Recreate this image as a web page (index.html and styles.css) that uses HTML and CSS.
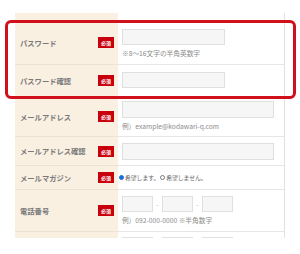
FILE: index.html
```html
<!DOCTYPE html>
<html lang="ja">
<head>
  <meta charset="UTF-8" />
  <meta name="viewport" content="width=device-width, initial-scale=1" />
  <title>会員登録</title>
  <link rel="stylesheet" href="styles.css">
</head>
<body>
  <div class="page">
    <div class="form">
      <div class="row row-top">
        <div class="label"></div>
        <div class="field"></div>
      </div>

      <div class="row row-pass">
        <div class="label"><span class="label-text">パスワード</span><span class="req">必須</span></div>
        <div class="field">
          <input class="input input-m" type="password" />
          <p class="note">※8～16文字の半角英数字</p>
        </div>
      </div>

      <div class="row row-pass2">
        <div class="label"><span class="label-text">パスワード確認</span><span class="req">必須</span></div>
        <div class="field">
          <input class="input input-m" type="password" />
        </div>
      </div>

      <div class="row row-mail">
        <div class="label"><span class="label-text">メールアドレス</span><span class="req">必須</span></div>
        <div class="field">
          <input class="input input-l" type="email" />
          <p class="note">例）example@kodawari-q.com</p>
        </div>
      </div>

      <div class="row row-mail2">
        <div class="label"><span class="label-text">メールアドレス確認</span><span class="req">必須</span></div>
        <div class="field">
          <input class="input input-l" type="email" />
        </div>
      </div>

      <div class="row row-magazine">
        <div class="label"><span class="label-text">メールマガジン</span><span class="req">必須</span></div>
        <div class="field field-radio">
          <span class="radio checked"></span><span class="radio-text">希望します。</span>
          <span class="radio"></span><span class="radio-text">希望しません。</span>
        </div>
      </div>

      <div class="row row-tel">
        <div class="label"><span class="label-text">電話番号</span><span class="req">必須</span></div>
        <div class="field">
          <div class="tel">
            <input class="input input-s" type="text" />
            <span class="dash">-</span>
            <input class="input input-s" type="text" />
            <span class="dash">-</span>
            <input class="input input-s" type="text" />
          </div>
          <p class="note">例）092-000-0000 ※半角数字</p>
        </div>
      </div>

      <div class="row row-next">
        <div class="label"></div>
        <div class="field">
          <div class="tel tel-cut">
            <span class="input input-s"></span>
            <span class="dash"></span>
            <span class="input input-s"></span>
            <span class="dash"></span>
            <span class="input input-s"></span>
          </div>
        </div>
      </div>
    </div>

    <!-- highlight frame over the password rows -->
    <div class="highlight"></div>
  </div>
</body>
</html>
```

FILE: styles.css
```css
/* Global Styles */
body {
  margin: 0;
  background-color: #fff;
  font-family: "Noto Sans CJK JP", "Noto Sans", sans-serif;
}
.page {
  position: relative;
  width: 300px;
  padding: 13px 0 0 15px;
  box-sizing: border-box;
}

/* Form Table */
.form {
  width: 270px;
  height: 225px;
  border-right: 1px solid #e2e2e2;
  box-sizing: border-box;
  overflow: hidden;
}
.row {
  display: flex;
}
.label {
  width: 103px;
  flex-shrink: 0;
  box-sizing: border-box;
  display: flex;
  align-items: center;
  justify-content: space-between;
  padding: 0 4px 0 5px;
  background-color: #faf0e2;
  border-bottom: 1px solid #ebe3d6;
}
.label-text {
  font-size: 7.3px;
  font-weight: bold;
  color: #7a7a7a;
  white-space: nowrap;
}
.req {
  width: 16px;
  height: 11px;
  display: flex;
  align-items: center;
  justify-content: center;
  background-color: #c8000b;
  color: #fff;
  font-size: 5px;
  font-weight: bold;
}
.field {
  flex: 1;
  box-sizing: border-box;
  padding-left: 4px;
  border-bottom: 1px solid #e6e6e6;
}

/* Row heights */
.row-top { height: 8px; }
.row-pass { height: 44px; }
.row-pass .field { padding-top: 8px; }
.row-pass2 { height: 32px; }
.row-pass2 .field { padding-top: 7px; }
.row-mail { height: 40px; }
.row-mail .field { padding-top: 4px; }
.row-mail2 { height: 29px; }
.row-mail2 .field { padding-top: 6px; }
.row-magazine { height: 24px; }
.row-tel { height: 42px; }
.row-tel .field { padding-top: 6px; }
.row-next { height: 6px; }
.row-next .label,
.row-next .field { border-bottom: none; }
.row-next .field { padding-top: 5px; }

/* Inputs */
.input {
  display: block;
  margin: 0;
  padding: 0;
  height: 16px;
  box-sizing: border-box;
  border: 1px solid #e0e0e0;
  background-color: #f6f6f6;
}
.input-m { width: 103px; }
.input-l { width: 152px; height: 17px; }
.input-s { width: 31px; }
.tel {
  display: flex;
  align-items: center;
  gap: 2px;
}
.tel-cut .input {
  height: 1px;
  border-bottom: none;
}
.dash {
  width: 5px;
  text-align: center;
  font-size: 6px;
  color: #999;
}
.note {
  margin: 4px 0 0;
  font-size: 6.7px;
  line-height: 8px;
  color: #8a8a8a;
  white-space: nowrap;
}

/* Radio */
.field-radio {
  display: flex;
  align-items: center;
  padding-left: 1px;
}
.radio {
  width: 5px;
  height: 5px;
  box-sizing: border-box;
  border-radius: 50%;
  border: 1px solid #777;
  background-color: #fff;
  margin-right: 1px;
}
.radio.checked {
  border-color: #1a6fe0;
  background-color: #1a6fe0;
}
.radio-text {
  font-size: 5.8px;
  color: #666;
  margin-right: 1px;
  white-space: nowrap;
}

/* Highlight frame */
.highlight {
  position: absolute;
  left: 5px;
  top: 20px;
  width: 291px;
  height: 79px;
  box-sizing: border-box;
  border: 3px solid #d0101b;
  border-radius: 6px;
}
```
